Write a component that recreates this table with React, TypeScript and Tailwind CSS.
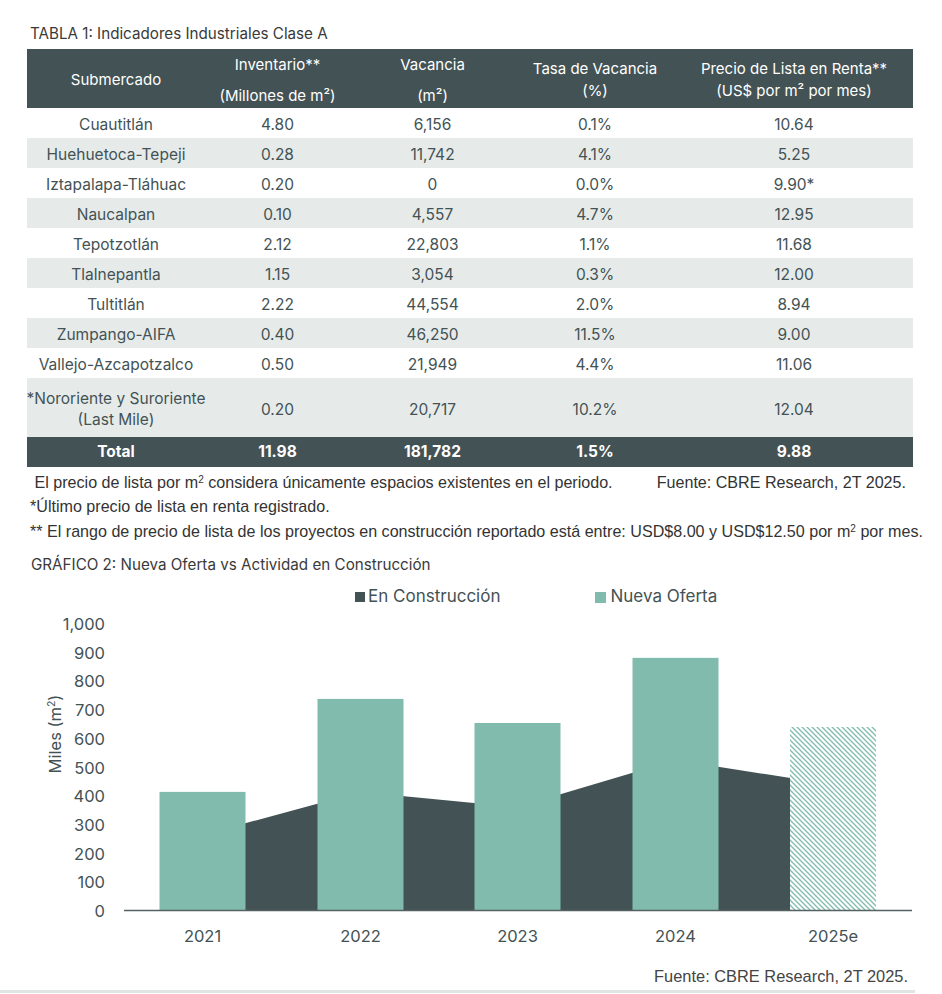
import React from "react";

const DARK = "#435254";
const TEAL = "#80bbad";

type Row = { name: React.ReactNode; inv: string; vac: string; tasa: string; precio: string; tall?: boolean };

const rows: Row[] = [
  { name: "Cuautitlán", inv: "4.80", vac: "6,156", tasa: "0.1%", precio: "10.64" },
  { name: "Huehuetoca-Tepeji", inv: "0.28", vac: "11,742", tasa: "4.1%", precio: "5.25" },
  { name: "Iztapalapa-Tláhuac", inv: "0.20", vac: "0", tasa: "0.0%", precio: "9.90*" },
  { name: "Naucalpan", inv: "0.10", vac: "4,557", tasa: "4.7%", precio: "12.95" },
  { name: "Tepotzotlán", inv: "2.12", vac: "22,803", tasa: "1.1%", precio: "11.68" },
  { name: "Tlalnepantla", inv: "1.15", vac: "3,054", tasa: "0.3%", precio: "12.00" },
  { name: "Tultitlán", inv: "2.22", vac: "44,554", tasa: "2.0%", precio: "8.94" },
  { name: "Zumpango-AIFA", inv: "0.40", vac: "46,250", tasa: "11.5%", precio: "9.00" },
  { name: "Vallejo-Azcapotzalco", inv: "0.50", vac: "21,949", tasa: "4.4%", precio: "11.06" },
  {
    name: (
      <>
        <span>*Nororiente y Suroriente</span>
        <span>(Last Mile)</span>
      </>
    ),
    inv: "0.20",
    vac: "20,717",
    tasa: "10.2%",
    precio: "12.04",
    tall: true,
  },
];

// datos del grafico (miles de m2)
const years = ["2021", "2022", "2023", "2024", "2025e"];
const nueva = [415, 739, 655, 882, 641];
const constr = [265, 415, 362, 526, 440];
const centers = [202.5, 360.5, 517.5, 675.5, 833];
const base = 911;
const k = 0.287;
const yOf = (v: number) => base - v * k;

const GRID = "grid grid-cols-[178px_145px_165px_160px_238px]";
const FONT = "Inter, sans-serif";

function Chart() {
  const barW = 86;
  const areaPts = [
    `${centers[0]},${base}`,
    ...centers.map((c, i) => `${c},${yOf(constr[i])}`),
    `${centers[4]},${base}`,
  ].join(" ");
  return (
    <svg width={942} height={350} viewBox="0 607 942 350" className="block">
      <defs>
        <pattern id="hatch" patternUnits="userSpaceOnUse" width={5} height={5}>
          <rect width={5} height={5} fill="white" />
          <path d="M-1,-1 L6,6 M-1,4 L1,6 M4,-1 L6,1" stroke={TEAL} strokeWidth={1.3} />
        </pattern>
      </defs>
      <g fontFamily={FONT} fill={DARK} fontSize={16.5}>
        {[0, 100, 200, 300, 400, 500, 600, 700, 800, 900, 1000].map((v) => (
          <text key={v} x={105} y={yOf(v) + 6} textAnchor="end">
            {v === 1000 ? "1,000" : v}
          </text>
        ))}
        <text transform="translate(61,734) rotate(-90)" textAnchor="middle" fontSize={16.5}>
          Miles (m<tspan fontSize={10.5} dy={-6}>2</tspan>
          <tspan dy={6}>)</tspan>
        </text>
        {years.map((y, i) => (
          <text key={y} x={centers[i]} y={942} textAnchor="middle">
            {y}
          </text>
        ))}
      </g>
      <polygon points={areaPts} fill={DARK} />
      {nueva.map((v, i) => (
        <rect
          key={i}
          x={centers[i] - barW / 2}
          y={yOf(v)}
          width={barW}
          height={base - yOf(v)}
          fill={i === 4 ? "url(#hatch)" : TEAL}
        />
      ))}
      <line x1={124} y1={910.5} x2={912} y2={910.5} stroke="#55625f" strokeWidth={1.5} />
    </svg>
  );
}

export default function App() {
  return (
    <div className="w-[942px] h-[994px] bg-white relative overflow-hidden font-['Inter',sans-serif] text-[#435254]">
      <div className="pt-[24px] pl-[30px] h-[49px] text-[15.2px] leading-[20px] text-[#3a3a3a]">
        TABLA 1: Indicadores Industriales Clase A
      </div>

      {/* tabla */}
      <div className="ml-[27px] w-[886px] text-center text-[15.5px]">
        <div className={`${GRID} h-[59px] bg-[#435254] text-white text-[15px]`}>
          <div className="flex items-center justify-center pt-[3px]">Submercado</div>
          <div className="flex flex-col justify-between pt-[6px] pb-[2px] leading-[20px]">
            <span>Inventario**</span>
            <span>(Millones de m²)</span>
          </div>
          <div className="flex flex-col justify-between pt-[6px] pb-[2px] leading-[20px]">
            <span>Vacancia</span>
            <span>(m²)</span>
          </div>
          <div className="flex flex-col justify-center pt-[2px] leading-[22px]">
            <span>Tasa de Vacancia</span>
            <span>(%)</span>
          </div>
          <div className="flex flex-col justify-center pt-[2px] leading-[22px]">
            <span>Precio de Lista en Renta**</span>
            <span>(US$ por m² por mes)</span>
          </div>
        </div>

        {rows.map((r, i) => (
          <div
            key={i}
            className={`${GRID} ${r.tall ? "h-[59px] leading-[21px]" : "h-[30px]"} ${
              i % 2 === 1 ? "bg-[#e6ebea]" : "bg-white"
            } items-center pt-[3px]`}
          >
            <div className="flex flex-col items-center whitespace-nowrap">{r.name}</div>
            <div>{r.inv}</div>
            <div>{r.vac}</div>
            <div>{r.tasa}</div>
            <div>{r.precio}</div>
          </div>
        ))}

        <div className={`${GRID} h-[30px] bg-[#435254] text-white font-bold items-center`}>
          <div>Total</div>
          <div>11.98</div>
          <div>181,782</div>
          <div>1.5%</div>
          <div>9.88</div>
        </div>
      </div>

      {/* notas */}
      <div className="h-[88px] font-['Liberation_Sans',Arial,sans-serif] text-[16.1px] leading-[24.5px] text-[#333] pl-[30px] pt-[2.5px]">
        <div className="flex justify-between w-[876px]">
          <span>
            &nbsp;El precio de lista por m<sup className="text-[10px]">2</sup> considera únicamente espacios existentes en el periodo.
          </span>
          <span>Fuente: CBRE Research, 2T 2025.</span>
        </div>
        <div>*Último precio de lista en renta registrado.</div>
        <div className="whitespace-nowrap">
          ** El rango de precio de lista de los proyectos en construcción reportado está entre: USD$8.00 y USD$12.50 por m
          <sup className="text-[10px]">2</sup> por mes.
        </div>
      </div>

      {/* grafico */}
      <div className="pl-[31px] h-[20px] text-[15.2px] leading-[20px] text-[#3a3a3a]">
        GRÁFICO 2: Nueva Oferta vs Actividad en Construcción
      </div>
      <div className="flex items-center h-[20px] mt-[12px] text-[17px] text-[#435254]">
        <div className="flex items-center ml-[355px]">
          <span className="w-[10px] h-[10px] bg-[#435254] mr-[3px]" />
          <span>En Construcción</span>
        </div>
        <div className="flex items-center ml-[95px]">
          <span className="w-[11px] h-[11px] bg-[#80bbad] mr-[4px]" />
          <span>Nueva Oferta</span>
        </div>
      </div>
      <Chart />
      <div className="flex justify-end pr-[34px] mt-[7px] h-[24px] font-['Liberation_Sans',Arial,sans-serif] text-[16.4px] leading-[24px] text-[#444]">
        Fuente: CBRE Research, 2T 2025.
      </div>
      <div className="absolute left-0 bottom-[1px] w-[915px] h-[3px] bg-[#e1e6e5]" />
    </div>
  );
}
